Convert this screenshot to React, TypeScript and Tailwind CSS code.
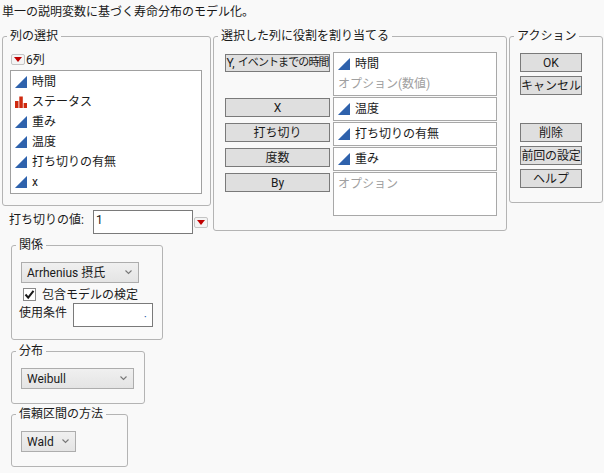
import type { ReactNode } from "react";

const FONT = "font-['Roboto','Noto_Sans_CJK_JP',sans-serif]";

function Group({ title, className, children }: { title: string; className: string; children: ReactNode }) {
  return (
    <div className={`relative rounded-[3px] border border-[#b4b4b4] ${className}`}>
      <span className="absolute left-[4px] top-[-10px] bg-[#f9f9f9] px-[3px] text-[12px] leading-[18px] text-[#1a1a1a]">{title}</span>
      {children}
    </div>
  );
}

function Continuous() {
  return (
    <svg width="12" height="12" viewBox="0 0 12 12" className="shrink-0">
      <path d="M0 12 L12 0 V12 Z" fill="#2f62ac" />
      <path d="M0.500 11.500 L11.500 0.500" fill="none" stroke="#7d9dd0" strokeWidth="0.700" />
    </svg>
  );
}

function Nominal() {
  return (
    <svg width="12" height="12" viewBox="0 0 12 12" className="shrink-0">
      <path d="M0 5H3.500V12H0ZM4.300 0.500H7.800V12H4.300ZM8.600 7H12V12H8.600Z" fill="#cf2a10" />
    </svg>
  );
}

function MenuButton() {
  return (
    <span className="flex h-[11px] w-[14px] items-center justify-center rounded-[2px] border border-[#c4c4c4] bg-[#f4f4f4]">
      <svg width="8" height="5" viewBox="0 0 8 5">
        <path d="M0 0H8L4 5Z" fill="#c00000" />
      </svg>
    </span>
  );
}

function ActionButton({ label, className = "" }: { label: ReactNode; className?: string }) {
  return (
    <div className={`flex items-center justify-center whitespace-nowrap border border-[#7a7a7a] bg-[#dfdfdf] text-[12px] text-[#1a1a1a] ${className}`}>
      {label}
    </div>
  );
}

function ColRow({ label, icon }: { label: string; icon?: ReactNode }) {
  return (
    <div className="flex h-[20px] items-center gap-[5px] pl-[4px] text-[12px] text-[#1a1a1a]">
      {icon ?? <Continuous />}
      <span>{label}</span>
    </div>
  );
}

function Select({ label, className }: { label: string; className: string }) {
  return (
    <div className={`flex h-[21px] items-center justify-between border border-[#adadad] bg-gradient-to-b from-[#f0f0f0] to-[#e4e4e4] pl-[5px] pr-[6px] text-[12px] text-[#1a1a1a] ${className}`}>
      <span>{label}</span>
      <svg width="7" height="5" viewBox="0 0 7 5">
        <path d="M0.500 0.500L3.500 3.500L6.500 0.500" fill="none" stroke="#777" strokeWidth="1.100" />
      </svg>
    </div>
  );
}

const ROLE_BOX = "border border-[#a8a8a8] bg-white";

export default function App() {
  return (
    <div className={`h-[473px] w-[604px] overflow-hidden bg-[#f9f9f9] pl-[2px] pt-[3px] ${FONT}`}>
      <div className="h-[18px] whitespace-nowrap text-[12px] leading-[18px] text-[#1a1a1a]">単一の説明変数に基づく寿命分布のモデル化。</div>

      <div className="mt-[15px] flex items-start">
        {/* left column */}
        <div className="w-[209px]">
          <Group title="列の選択" className="h-[170px] w-[209px] pl-[7px] pt-[14px]">
            <div className="flex h-[17px] items-center gap-[1px] pl-[1px] text-[12px] text-[#1a1a1a]">
              <MenuButton />
              <span>6列</span>
            </div>
            <div className="mt-[2px] h-[124px] w-[192px] border border-[#a0a0a0] bg-white pt-[1px]">
              <ColRow label="時間" />
              <ColRow label="ステータス" icon={<Nominal />} />
              <ColRow label="重み" />
              <ColRow label="温度" />
              <ColRow label="打ち切りの有無" />
              <ColRow label="x" />
            </div>
          </Group>

          <div className="mt-[4px] flex items-start pl-[7px]">
            <span className="w-[84px] pt-[1px] text-[12px] leading-[18px] text-[#1a1a1a]">打ち切りの値:</span>
            <div className="h-[24px] w-[100px] border border-[#7a7a7a] bg-white pl-[2px] text-[12px] leading-[18px] text-[#1a1a1a]">1</div>
            <span className="ml-[1px] mt-[7px]"><MenuButton /></span>
          </div>

          <Group title="関係" className="ml-[9px] mt-[11px] h-[95px] w-[152px] pl-[9px] pt-[16px]">
            <Select label="Arrhenius 摂氏" className="w-[118px]" />
            <div className="mt-[5px] flex h-[13px] items-center pl-[2px] text-[12px] text-[#1a1a1a]">
              <span className="flex h-[13px] w-[13px] items-center justify-center border border-[#8a8a8a] bg-white">
                <svg width="11" height="11" viewBox="0 0 11 11">
                  <path d="M1.500 5.500L4.200 8.700L9.500 1.800" fill="none" stroke="#1a1a1a" strokeWidth="2" />
                </svg>
              </span>
              <span className="ml-[6px] whitespace-nowrap">包含モデルの検定</span>
            </div>
            <div className="mt-[2px] flex items-start">
              <span className="-ml-[2px] w-[54px] pt-[1px] text-[12px] leading-[18px] text-[#1a1a1a]">使用条件</span>
              <div className="h-[24px] w-[80px] border border-[#7a7a7a] bg-white pr-[5px] pt-[4px] text-right text-[12px] leading-[18px] text-[#2f62ac]">·</div>
            </div>
          </Group>

          <Group title="分布" className="ml-[9px] mt-[11px] h-[53px] w-[134px] pl-[9px] pt-[16px]">
            <Select label="Weibull" className="w-[113px]" />
          </Group>

          <Group title="信頼区間の方法" className="ml-[9px] mt-[10px] h-[53px] w-[117px] pl-[9px] pt-[16px]">
            <Select label="Wald" className="w-[55px]" />
          </Group>
        </div>

        {/* assign roles */}
        <Group title="選択した列に役割を割り当てる" className="ml-[2px] h-[195px] w-[294px] pl-[11px] pt-[15px]">
          <div className="flex gap-[3px]">
            <div className="flex w-[105px] flex-col">
              <ActionButton
                label={
                  <>
                    <span className="whitespace-pre">Y, </span>
                    <span className="text-[11px] tracking-[-0.9px]">イベントまでの時間</span>
                  </>
                }
                className="mt-[2px] h-[18px]"
              />
              <ActionButton label="X" className="mt-[26px] h-[19px]" />
              <ActionButton label="打ち切り" className="mt-[6px] h-[19px]" />
              <ActionButton label="度数" className="mt-[6px] h-[19px]" />
              <ActionButton label="By" className="mt-[6px] h-[19px]" />
            </div>
            <div className="flex w-[164px] flex-col gap-[1px] text-[12px] text-[#1a1a1a]">
              <div className={`h-[44px] pt-[1px] ${ROLE_BOX}`}>
                <ColRow label="時間" />
                <div className="pl-[4px] leading-[20px] text-[#a0a0a0]">オプション(数値)</div>
              </div>
              <div className={`flex h-[24px] items-center ${ROLE_BOX}`}><ColRow label="温度" /></div>
              <div className={`flex h-[24px] items-center ${ROLE_BOX}`}><ColRow label="打ち切りの有無" /></div>
              <div className={`flex h-[24px] items-center ${ROLE_BOX}`}><ColRow label="重み" /></div>
              <div className={`h-[44px] pl-[4px] pt-[1px] leading-[20px] text-[#a0a0a0] ${ROLE_BOX}`}>オプション</div>
            </div>
          </div>
        </Group>

        {/* actions */}
        <Group title="アクション" className="ml-[2px] h-[167px] w-[94px] pl-[10px] pt-[16px]">
          <div className="flex w-[62px] flex-col">
            <ActionButton label="OK" className="h-[19px]" />
            <ActionButton label="キャンセル" className="mt-[4px] h-[19px]" />
            <ActionButton label="削除" className="mt-[28px] h-[19px]" />
            <ActionButton label="前回の設定" className="mt-[4px] h-[19px] tracking-[-0.2px]" />
            <ActionButton label="ヘルプ" className="mt-[4px] h-[19px]" />
          </div>
        </Group>
      </div>
    </div>
  );
}
